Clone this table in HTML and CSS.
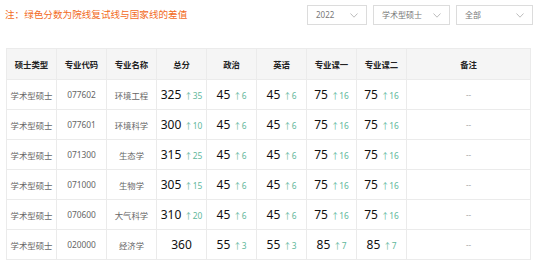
FILE: index.html
```html
<!DOCTYPE html>
<html lang="zh">
<head>
<meta charset="utf-8">
<link rel="stylesheet" href="styles.css">
</head>
<body>
<div class="page">
  <div class="topbar">
    <div class="note">注：绿色分数为院线复试线与国家线的差值</div>
    <div class="filters">
      <div class="select w60"><span>2022</span><svg class="chev" viewBox="0 0 8 5" width="8" height="5"><path d="M0.5 0.5 L4 4.2 L7.5 0.5" fill="none" stroke="#b5b5b5" stroke-width="0.9"/></svg></div>
      <div class="select w77"><span>学术型硕士</span><svg class="chev" viewBox="0 0 8 5" width="8" height="5"><path d="M0.5 0.5 L4 4.2 L7.5 0.5" fill="none" stroke="#b5b5b5" stroke-width="0.9"/></svg></div>
      <div class="select w77"><span>全部</span><svg class="chev" viewBox="0 0 8 5" width="8" height="5"><path d="M0.5 0.5 L4 4.2 L7.5 0.5" fill="none" stroke="#b5b5b5" stroke-width="0.9"/></svg></div>
    </div>
  </div>
  <table class="grid">
    <colgroup>
      <col class="c50"><col class="c50"><col class="c50"><col class="c50"><col class="c50"><col class="c50"><col class="c50"><col class="c50"><col class="crem">
    </colgroup>
    <thead>
      <tr><th>硕士类型</th><th>专业代码</th><th>专业名称</th><th>总分</th><th>政治</th><th>英语</th><th>专业课一</th><th>专业课二</th><th>备注</th></tr>
    </thead>
    <tbody>
      <tr><td>学术型硕士</td><td>077602</td><td>环境工程</td><td><b>325</b><i>↑35</i></td><td><b>45</b><i>↑6</i></td><td><b>45</b><i>↑6</i></td><td><b>75</b><i>↑16</i></td><td><b>75</b><i>↑16</i></td><td class="rem">--</td></tr>
      <tr><td>学术型硕士</td><td>077601</td><td>环境科学</td><td><b>300</b><i>↑10</i></td><td><b>45</b><i>↑6</i></td><td><b>45</b><i>↑6</i></td><td><b>75</b><i>↑16</i></td><td><b>75</b><i>↑16</i></td><td class="rem">--</td></tr>
      <tr><td>学术型硕士</td><td>071300</td><td>生态学</td><td><b>315</b><i>↑25</i></td><td><b>45</b><i>↑6</i></td><td><b>45</b><i>↑6</i></td><td><b>75</b><i>↑16</i></td><td><b>75</b><i>↑16</i></td><td class="rem">--</td></tr>
      <tr><td>学术型硕士</td><td>071000</td><td>生物学</td><td><b>305</b><i>↑15</i></td><td><b>45</b><i>↑6</i></td><td><b>45</b><i>↑6</i></td><td><b>75</b><i>↑16</i></td><td><b>75</b><i>↑16</i></td><td class="rem">--</td></tr>
      <tr><td>学术型硕士</td><td>070600</td><td>大气科学</td><td><b>310</b><i>↑20</i></td><td><b>45</b><i>↑6</i></td><td><b>45</b><i>↑6</i></td><td><b>75</b><i>↑16</i></td><td><b>75</b><i>↑16</i></td><td class="rem">--</td></tr>
      <tr><td>学术型硕士</td><td>020000</td><td>经济学</td><td><b>360</b></td><td><b>55</b><i>↑3</i></td><td><b>55</b><i>↑3</i></td><td><b>85</b><i>↑7</i></td><td><b>85</b><i>↑7</i></td><td class="rem">--</td></tr>
    </tbody>
  </table>
</div>
</body>
</html>
```

FILE: styles.css
```css
* { box-sizing: border-box; }
html, body { margin: 0; padding: 0; background: #fff; }
body {
  font-family: "Noto Sans", "Noto Sans CJK SC", sans-serif;
  color: #333;
}
.page { padding: 5px 0 0 0; }
.topbar {
  display: flex;
  align-items: center;
  justify-content: space-between;
  height: 20px;
  padding: 0 9px 0 5px;
}
.note {
  font-size: 9.6px;
  color: #f26b1d;
  line-height: 20px;
}
.filters { display: flex; gap: 6px; }
.select {
  height: 20px;
  border: 1px solid #dcdcdc;
  background: #fff;
  display: flex;
  align-items: center;
  justify-content: space-between;
  padding: 0 8px 0 8px;
  font-size: 8px;
  color: #777;
}
.select span { line-height: 18px; }
.w60 { width: 60px; }
.w77 { width: 77px; }
.chev { display: block; }

.grid {
  margin: 23px 0 0 6px;
  border-collapse: collapse;
  table-layout: fixed;
  width: 524px;
}
.c50 { width: 50px; }
.crem { width: 124px; }
.grid th, .grid td {
  border: 1px solid #ebebeb;
  text-align: center;
  padding: 0;
  white-space: nowrap;
}
.grid th {
  height: 31px;
  background: #f5f5f5;
  font-size: 8.4px;
  font-weight: 700;
  color: #222;
}
.grid td {
  height: 30px;
  font-size: 8.4px;
  color: #666;
}
.grid td b {
  font-weight: 400;
  font-size: 12px;
  color: #111;
}
.grid td i {
  font-style: normal;
  font-size: 8.4px;
  color: #5fb89c;
  margin-left: 3px;
}
.grid td.rem { color: #aaa; font-size: 8px; }
```
